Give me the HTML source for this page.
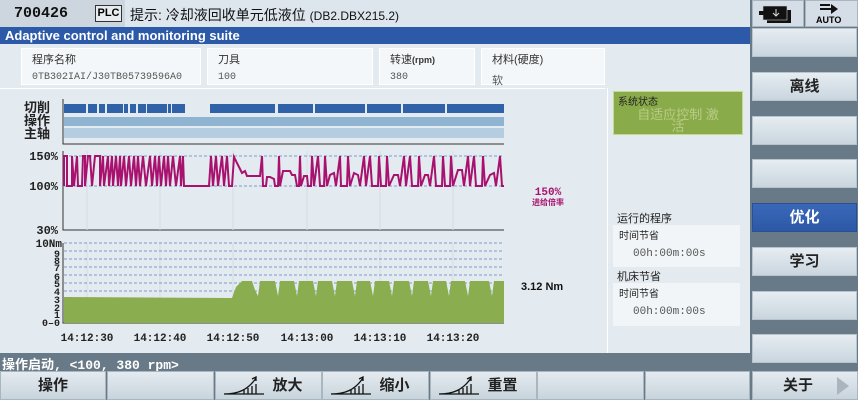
<!DOCTYPE html>
<html><head><meta charset="utf-8"><style>
*{margin:0;padding:0;box-sizing:border-box}
body{width:858px;height:400px;overflow:hidden;background:#687a88;font-family:"Liberation Sans","Noto Sans CJK SC",sans-serif;position:relative}
.a{position:absolute}
.sk{position:absolute;left:752px;width:105px;height:29px;background:linear-gradient(#e6edf2,#c9d5de);border:1px solid #b8c4cc;font-size:15px;font-weight:bold;color:#222;text-align:center;line-height:28px}
.bb{position:absolute;top:371px;height:29px;background:linear-gradient(#e4ebf0,#c8d4dc);border:1px solid #aab6bf;font-size:15px;font-weight:bold;color:#222;text-align:center;line-height:28px}
.box{position:absolute;top:48px;height:37px;background:#f4f7f9;border:1px solid #fff;font-size:11px;color:#333;padding:2px 0 0 10px}
.box .v{font-family:"Liberation Mono",monospace;font-size:10px;color:#555;margin-top:5px;padding-left:0}
.mono{font-family:"Liberation Mono","Noto Sans CJK SC",monospace}
</style></head><body>
<div class="a" style="left:0;top:0;width:750px;height:27px;background:#dde5ed"></div>
<div class="a" style="left:0;top:0;width:125px;height:27px;background:#cdd6de"></div>
<div class="a mono" style="left:14px;top:5px;font-size:15px;font-weight:bold;color:#111">700426</div>
<div class="a" style="left:95px;top:5px;width:27px;height:17px;border:1px solid #333;background:#e8ecef;font-size:11px;font-weight:bold;text-align:center;line-height:15px">PLC</div>
<div class="a" style="left:130px;top:5px;font-size:14px;color:#111">提示: 冷却液回收单元低液位 <span style="font-size:12px">(DB2.DBX215.2)</span></div>
<div class="a" style="left:752px;top:0;width:52px;height:27px;background:#d5dee6;border:1px solid #aab6bf"></div>
<div class="a" style="left:805px;top:0;width:53px;height:27px;background:#d5dee6;border:1px solid #aab6bf"></div>
<svg class="a" style="left:759px;top:3px" width="40" height="22"><rect x="8" y="7" width="24" height="13" fill="#111"/><rect x="4" y="3" width="24" height="14" fill="#111" stroke="#ccc" stroke-width=".6"/><rect x="0" y="8" width="6" height="4" fill="#111"/><path d="M17 6v7M14 10l3 3 3-3" stroke="#ddd" fill="none"/></svg>
<svg class="a" style="left:818px;top:3px" width="26" height="12"><path d="M2 6h12M2 2h10" stroke="#111" stroke-width="2"/><path d="M13 1l7 5-7 5z" fill="#111"/></svg>
<div class="a" style="left:816px;top:15px;font-size:9px;font-weight:bold">AUTO</div>

<div class="a" style="left:0;top:27px;width:750px;height:17px;background:#2c59a8;color:#fff;font-size:13px;font-weight:bold;padding:1px 5px">Adaptive control and monitoring suite</div>
<div class="a" style="left:0;top:44px;width:750px;height:309px;background:#e4ebf0"></div>
<div class="box" style="left:21px;width:180px">程序名称<div class="v">0TB302IAI/J30TB05739596A0</div></div>
<div class="box" style="left:207px;width:166px">刀具<div class="v">100</div></div>
<div class="box" style="left:379px;width:96px">转速<b style="font-size:9px">(rpm)</b><div class="v">380</div></div>
<div class="box" style="left:481px;width:124px">材料(硬度)<div class="v" style="font-family:'Noto Sans CJK SC';font-size:11px">软</div></div>
<div class="a" style="left:0;top:88px;width:605px;height:1px;background:#fff"></div>
<div class="a" style="left:607px;top:88px;width:1px;height:265px;background:#fff"></div>
<div class="a" style="left:613px;top:91px;width:130px;height:44px;background:#8aab4a;border:1px solid #c7d98d;font-size:10px;color:#222;padding:1px 4px">系统状态<div style="font-size:13px;color:#b9cc87;text-align:center;line-height:12px;margin-top:1px;white-space:nowrap">自适应控制 激<br>活</div></div>

<svg class="a" style="left:0;top:95px" width="605" height="258" font-family="Liberation Mono,Noto Sans CJK SC,monospace" font-weight="bold">
<g font-size="13" fill="#222" font-family="Noto Sans CJK SC"><text x="24" y="17">切削</text><text x="24" y="30">操作</text><text x="24" y="43">主轴</text></g>
<rect x="64" y="22" width="440" height="9" fill="#8fb4d2"/><rect x="64" y="33" width="440" height="10" fill="#b5cde0"/>
<g fill="#2f62a8"><rect x="64" y="9" width="22" height="9"/><rect x="88" y="9" width="9" height="9"/><rect x="99" y="9" width="6" height="9"/><rect x="107" y="9" width="16" height="9"/><rect x="124" y="9" width="4" height="9"/><rect x="130" y="9" width="6" height="9"/><rect x="138" y="9" width="8" height="9"/><rect x="147" y="9" width="20" height="9"/><rect x="168" y="9" width="3" height="9"/><rect x="172" y="9" width="13" height="9"/><rect x="210" y="9" width="65" height="9"/><rect x="278" y="9" width="35" height="9"/><rect x="315" y="9" width="50" height="9"/><rect x="367" y="9" width="34" height="9"/><rect x="403" y="9" width="42" height="9"/><rect x="447" y="9" width="57" height="9"/></g>
<path d="M63 4V49H504M63 56V135H504M63 148V228H504" stroke="#333" fill="none"/>
<g stroke="#d3dbe2"><path d="M87 56v79M160 56v79M233 56v79M307 56v79M380 56v79M453 56v79M87 148v80M160 148v80M233 148v80M307 148v80M380 148v80M453 148v80"/></g>
<g stroke="#7b98c8" stroke-dasharray="3,2"><path d="M64 61H504M64 91H504M64 148H504M64 156H504M64 164H504M64 172H504M64 180H504M64 188H504M64 196H504M64 204H504M64 212H504M64 220H504"/></g>
<g font-size="12" fill="#222" text-anchor="end"><text x="58" y="65">150%</text><text x="58" y="95">100%</text><text x="58" y="139">30%</text><text x="62" y="152" font-size="11">10Nm</text></g>
<g font-size="10" fill="#222" text-anchor="end"><text x="60" y="162">9</text><text x="60" y="169">8</text><text x="60" y="176">7</text><text x="60" y="185">6</text><text x="60" y="192">5</text><text x="60" y="200">4</text><text x="60" y="208">3</text><text x="60" y="216">2</text><text x="60" y="223">1</text><text x="60" y="231">0–0</text></g>
<polyline fill="none" stroke="#a8116e" stroke-width="2" points="64,91 64,61 67,61 67,91 72,91 72,61 74,91 77,61 78,91 82,91 83,61 85,61 85,91 88,61 90,61 92,91 95,61 100,61 100,91 103,61 104,91 108,61 109,91 112,61 113,91 116,61 118,91 120,61 121,91 124,61 126,91 129,61 131,91 134,61 136,91 138,61 140,91 143,61 146,91 150,61 152,91 155,61 157,91 159,61 161,91 164,61 166,91 168,61 170,91 173,61 176,91 180,61 181,91 183,61 184,91 209,91 211,61 213,91 216,61 218,91 222,61 224,91 227,61 229,91 232,91 234,62 238,70 242,78 245,76 247,81 260,81 262,61 263,91 266,91 267,82 270,82 274,84 275,91 278,91 279,61 280,91 283,76 290,76 292,80 295,80 297,91 299,91 300,61 301,91 304,81 307,81 308,91 311,91 312,61 314,91 318,61 320,91 324,91 325,61 327,91 330,80 334,78 336,91 340,61 341,91 347,91 348,61 350,91 354,78 358,80 360,91 364,61 366,91 370,61 372,91 378,91 379,61 381,91 386,91 387,61 389,91 394,80 398,80 400,91 404,61 406,91 410,61 412,91 418,91 419,61 421,91 425,80 428,80 430,91 434,61 436,91 442,91 443,61 445,91 450,91 451,61 453,91 458,75 462,75 464,91 468,61 470,91 474,61 476,91 482,91 483,61 485,91 490,80 494,78 496,91 500,61 502,91 504,91"/>
<polygon fill="#8aad4f" points="64,228 64,202 232,203 236,192 242,186 252,186 255,195 258,201 260,186 275,186 278,201 280,186 294,186 297,201 299,186 313,186 316,201 318,186 332,186 335,201 337,186 352,186 355,201 357,186 370,186 373,201 375,186 389,186 392,201 394,186 409,186 412,201 414,186 428,186 431,201 433,186 446,186 449,201 451,186 465,186 468,201 470,186 489,186 492,201 494,186 504,186 504,228"/>
<g font-size="11" fill="#222" text-anchor="middle"><text x="87" y="246">14:12:30</text><text x="160" y="246">14:12:40</text><text x="233" y="246">14:12:50</text><text x="307" y="246">14:13:00</text><text x="380" y="246">14:13:10</text><text x="453" y="246">14:13:20</text></g>
<text x="548" y="100" font-size="11" fill="#a8116e" text-anchor="middle">150%</text>
<text x="548" y="110" font-size="8" fill="#a8116e" text-anchor="middle" font-family="Noto Sans CJK SC">进给倍率</text>
<text x="521" y="195" font-size="11" fill="#111" font-family="Liberation Sans">3.12 Nm</text>
</svg>

<div class="a" style="left:617px;top:210px;font-size:11px;color:#222">运行的程序</div>
<div class="a" style="left:613px;top:225px;width:127px;height:42px;background:#f2f5f7;font-size:10px;color:#222;padding:2px 6px">时间节省<div class="mono" style="font-size:11px;color:#555;margin:6px 0 0 14px">00h:00m:00s</div></div>
<div class="a" style="left:617px;top:268px;font-size:11px;color:#222">机床节省</div>
<div class="a" style="left:613px;top:283px;width:127px;height:43px;background:#f2f5f7;font-size:10px;color:#222;padding:2px 6px">时间节省<div class="mono" style="font-size:11px;color:#555;margin:6px 0 0 14px">00h:00m:00s</div></div>

<div class="sk" style="top:28px"></div>
<div class="sk" style="top:72px">离线</div>
<div class="sk" style="top:116px"></div>
<div class="sk" style="top:159px"></div>
<div class="sk" style="top:203px;background:linear-gradient(#3a68b8,#2c58a6);color:#fff;border-color:#2a4f92">优化</div>
<div class="sk" style="top:247px">学习</div>
<div class="sk" style="top:291px"></div>
<div class="sk" style="top:334px"></div>

<div class="a" style="left:2px;top:354px;font-size:13px;color:#fff;font-weight:bold;font-family:'Liberation Mono','Noto Sans CJK SC',monospace">操作启动, &lt;100, 380 rpm&gt;</div>
<div class="bb" style="left:0;width:106px">操作</div>
<div class="bb" style="left:107px;width:107px"></div>
<div class="bb" style="left:215px;width:107px;padding-left:38px">放大</div>
<div class="bb" style="left:322px;width:107px;padding-left:38px">缩小</div>
<div class="bb" style="left:430px;width:107px;padding-left:38px">重置</div>
<div class="bb" style="left:537px;width:107px"></div>
<div class="bb" style="left:645px;width:105px"></div>
<div class="bb" style="left:752px;width:106px;padding-right:14px">关于</div>
<svg class="a" style="left:835px;top:375px" width="16" height="22"><path d="M2 2L14 11 2 20z" fill="#a9b6c0"/></svg>
<svg class="a" style="left:222px;top:376px" width="270" height="22" fill="none" stroke="#111" stroke-width="1.3">
<g><path d="M2 18h40M2 18c14 0 24-4 32-16M30 3l4-2 0 4M22 18v-4M26 18v-6M30 18v-8M34 18v-10"/></g>
<g transform="translate(107,0)"><path d="M2 18h40M2 18c14 0 24-4 32-16M30 3l4-2 0 4M22 18v-4M26 18v-6M30 18v-8M34 18v-10"/></g>
<g transform="translate(215,0)"><path d="M2 18h40M2 18c14 0 24-4 32-16M30 3l4-2 0 4M22 18v-4M26 18v-6M30 18v-8M34 18v-10"/></g>
</svg>
</body></html>
